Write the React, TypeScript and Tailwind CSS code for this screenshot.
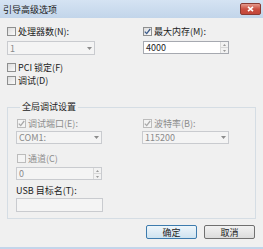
import type { ReactNode } from "react";

function Check({ checked, disabled }: { checked?: boolean; disabled?: boolean }) {
  return (
    <span
      className={`flex h-[9px] w-[9px] shrink-0 items-center justify-center border ${
        disabled
          ? "border-[#bcbcbc] bg-[#f4f4f4]"
          : "border-[#8e8f8f] bg-gradient-to-br from-[#dcdcdc] to-[#fbfbfb]"
      }`}
    >
      {checked && (
        <svg width="7" height="7" viewBox="0 0 7 7">
          <path
            d="M0.8 3.6 L2.7 5.6 L6.2 1"
            fill="none"
            stroke={disabled ? "#a9a9a9" : "#3b5a8a"}
            strokeWidth="1.3"
          />
        </svg>
      )}
    </span>
  );
}

function CheckRow({
  label,
  checked,
  disabled,
}: {
  label: ReactNode;
  checked?: boolean;
  disabled?: boolean;
}) {
  return (
    <div className="flex h-[11px] items-center gap-[2px]">
      <Check checked={checked} disabled={disabled} />
      <span className={disabled ? "text-[#8d8d8d]" : "text-[#1b1b1b]"}>{label}</span>
    </div>
  );
}

function Field({
  value,
  kind,
  disabled,
  width,
  height = "h-[13px]",
}: {
  value: string;
  kind: "select" | "spin" | "text";
  disabled?: boolean;
  width: string;
  height?: string;
}) {
  return (
    <div
      className={`flex ${width} ${height} items-center border ${
        disabled ? "border-[#c9cbcf] bg-[#f4f4f4] text-[#8a8a8a]" : "border-[#a6a9b0] bg-white text-[#222]"
      }`}
    >
      <span className="flex-1 pl-[2px] leading-none">{value}</span>
      {kind === "select" && (
        <span className="flex w-[10px] items-center justify-center">
          <svg width="5" height="3" viewBox="0 0 5 3">
            <path d="M0 0 H5 L2.5 3 Z" fill="#8c8c8c" />
          </svg>
        </span>
      )}
      {kind === "spin" && (
        <span className="flex h-full w-[8px] flex-col border-l border-[#d8d8d8] bg-[#f2f2f2]">
          <span className="flex flex-1 items-center justify-center border-b border-[#d8d8d8]">
            <svg width="3" height="2" viewBox="0 0 3 2">
              <path d="M0 2 H3 L1.5 0 Z" fill="#9a9a9a" />
            </svg>
          </span>
          <span className="flex flex-1 items-center justify-center">
            <svg width="3" height="2" viewBox="0 0 3 2">
              <path d="M0 0 H3 L1.5 2 Z" fill="#9a9a9a" />
            </svg>
          </span>
        </span>
      )}
    </div>
  );
}

export default function App() {
  return (
    <div className="flex h-[249px] w-[263px] flex-col overflow-hidden border-b-2 border-[#c3d5ea] bg-[#f0f0f0] font-['Noto_Sans_CJK_SC','Liberation_Sans',sans-serif] text-[9px] leading-none">
      {/* title bar */}
      <div className="flex h-[18px] shrink-0 items-center justify-between bg-gradient-to-b from-[#d5e3f3] to-[#c2d5ea] pl-[3px] pr-[2px]">
        <span className="text-[#202020]">引导高级选项</span>
        <span className="flex h-[12px] w-[21px] items-center justify-center rounded-[2px] border border-[#8a3a33] bg-gradient-to-b from-[#e49a8e] via-[#cb4f42] to-[#c2473a]">
          <svg width="7" height="6" viewBox="0 0 7 6">
            <path d="M1 0.8 L6 5.2 M6 0.8 L1 5.2" stroke="#fff" strokeWidth="1.6" />
          </svg>
        </span>
      </div>

      <div className="flex flex-1 flex-col px-[7px] pt-[8px]">
        <div className="grid grid-cols-[135px_1fr]">
          <div className="flex flex-col gap-[4px]">
            <CheckRow label="处理器数(N):" />
            <Field value="1" kind="select" disabled width="w-[88px]" height="h-[14px]" />
          </div>
          <div className="flex flex-col gap-[4px] pl-[1px]">
            <CheckRow label="最大内存(M):" checked />
            <Field value="4000" kind="spin" width="w-[86px]" />
          </div>
        </div>

        <div className="mt-[7px]">
          <CheckRow label="PCI 锁定(F)" />
        </div>
        <div className="mt-[2px]">
          <CheckRow label="调试(D)" />
        </div>

        <fieldset className="mt-[16px] border border-[#d5dde4] px-[8px] pb-[6px]">
          <legend className="ml-[4px] h-[11px] px-[2px] text-[#1b1b1b]">全局调试设置</legend>
          <div className="mt-[5px] grid grid-cols-[126px_1fr]">
            <div className="flex flex-col gap-[2px] pl-[1px]">
              <CheckRow label="调试端口(E):" checked disabled />
            </div>
            <div className="flex flex-col gap-[2px] pl-[1px]">
              <CheckRow label="波特率(B):" checked disabled />
            </div>
            <div className="mt-[2px]">
              <Field value="COM1:" kind="select" disabled width="w-[86px]" />
            </div>
            <div className="mt-[2px]">
              <Field value="115200" kind="select" disabled width="w-[87px]" />
            </div>
          </div>
          <div className="mt-[9px] pl-[1px]">
            <CheckRow label="通道(C)" disabled />
          </div>
          <div className="mt-[3px]">
            <Field value="0" kind="spin" disabled width="w-[86px]" />
          </div>
          <div className="mt-[5px] flex h-[11px] items-center text-[#1b1b1b]">USB 目标名(T):</div>
          <div className="mt-[2px]">
            <Field value="" kind="text" disabled width="w-[87px]" height="h-[14px]" />
          </div>
        </fieldset>

        <div className="mt-[6px] flex justify-end gap-[7px] pr-[1px]">
          <button className="h-[14px] w-[51px] rounded-[2px] border border-[#3d7bad] bg-gradient-to-b from-[#eef6fb] to-[#cfe3f0] text-[#1b1b1b] leading-none">
            确定
          </button>
          <button className="h-[14px] w-[51px] rounded-[2px] border border-[#707070] bg-gradient-to-b from-[#f2f2f2] to-[#dcdcdc] text-[#1b1b1b] leading-none">
            取消
          </button>
        </div>
      </div>
    </div>
  );
}
